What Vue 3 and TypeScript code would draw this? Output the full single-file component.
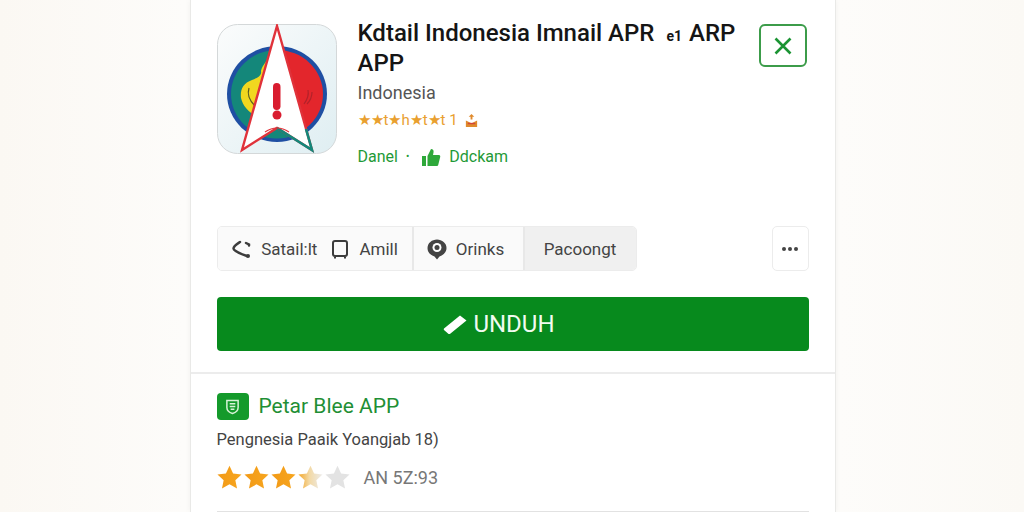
<script setup lang="ts">
interface Tab {
  label: string;
  icon?: 'share' | 'book' | 'pin';
}

const groups: { tabs: Tab[]; active?: boolean; width: number }[] = [
  {
    width: 196,
    tabs: [
      { label: 'Satail:lt', icon: 'share' },
      { label: 'Amill', icon: 'book' },
    ],
  },
  { width: 111, tabs: [{ label: 'Orinks', icon: 'pin' }] },
  { width: 111, active: true, tabs: [{ label: 'Pacoongt' }] },
];

const STAR = 'M12 1.5l3.2 6.9 7.5.9-5.5 5.1 1.500 7.4L12 18.100l-6.700 3.700 1.500-7.400L1.300 9.300l7.500-.9z';
const stars = ['url(#full)', 'url(#full)', 'url(#full)', 'url(#half)', '#e3e3e3'];
</script>

<template>
  <main class="page">
    <section class="card">
      <div class="top">
        <header class="head">
          <div class="app-icon">
            <svg viewBox="0 0 120 130" width="120" height="130">
              <defs>
                <linearGradient id="tile" x1="0" y1="0" x2="1" y2="1">
                  <stop offset="0" stop-color="#fbfcfc" />
                  <stop offset="1" stop-color="#dfeef2" />
                </linearGradient>
              </defs>
              <rect x=".5" y=".5" width="119" height="129" rx="20" fill="url(#tile)" stroke="#d4d8d9" />
              <ellipse cx="60" cy="70" rx="50" ry="48" fill="#1f4fa3" />
              <path d="M60 26A46 44 0 0 1 60 114z" fill="#e3262c" />
              <path d="M60 26A46 44 0 0 0 60 114z" fill="#14877a" />
              <path d="M80 110a46 44 0 0 1-40 0l20-12z" fill="#14877a" />
              <path d="M54 27c-1 7-9 14-10 20 1 5-4 7-9 9-9 3-12 10-11 18 2 9 9 15 19 21l12-30z" fill="#f1d71f" />
              <path d="M32 64c-2 6 0 12 6 18" fill="none" stroke="#5a5a22" stroke-width="1.200" />
              <path d="M91 66c1 5-1 10-4 14M95 68c0 5-2 9-5 12" fill="none" stroke="#b3222a" stroke-width="1.200" />
              <path d="M60 2l35 124-35-22-35 22z" fill="#fff" stroke="#e0323a" stroke-width="2.400" stroke-linejoin="miter" />
              <path d="M60 104l35 22-6-21" fill="none" stroke="#14877a" stroke-width="2.600" />
              <path d="M48 108q12-8 24 0" fill="none" stroke="#e0323a" stroke-width="1.200" />
              <rect x="56" y="59" width="7.500" height="27" rx="3.700" fill="#d91c2f" />
              <circle cx="60" cy="91" r="4.500" fill="#d91c2f" />
            </svg>
          </div>
          <div class="info">
            <h1 class="title">
              <span class="line">Kdtail Indonesia Imnail APR <small>e1</small> ARP</span>
              <span class="line">APP</span>
            </h1>
            <p class="region">Indonesia</p>
            <p class="rating">
              ★★t★h★t★t 1
              <svg viewBox="0 0 16 16" width="15" height="15">
                <path d="M8 1l3 3H9v3H7V4H5zM2 8l6 3 6-3v7H2z" fill="#e08a2c" />
                <path d="M4 10.500h8v1.500H4z" fill="#d0453a" />
              </svg>
            </p>
            <p class="meta">
              <span>Danel</span>
              <span class="dot">•</span>
              <svg viewBox="0 0 20 20" width="20" height="20">
                <path d="M1 9h4v10H1zM6.500 9l3.500-7c2 0 3 1.500 2.500 3.500L12 8h6c1 0 1.500 1 1.200 2l-2 8c-.2.700-.8 1-1.500 1H6.500z" fill="#2eA83a" />
              </svg>
              <span>Ddckam</span>
            </p>
          </div>
          <button class="close" type="button" aria-label="Tutup">
            <svg viewBox="0 0 20 20" width="20" height="20">
              <path d="M2.500 2.500l15 15M17.500 2.500l-15 15" stroke="#1b9433" stroke-width="2.600" fill="none" />
            </svg>
          </button>
        </header>

        <div class="actions">
          <div class="tabs">
            <div
              v-for="group in groups"
              :key="group.label"
              class="group"
              :class="{ active: group.active }"
              :style="{ width: group.width + 'px' }"
            >
              <span v-for="tab in group.tabs" :key="tab.label" class="tab">
                <svg v-if="tab.icon === 'share'" viewBox="0 0 22 22" width="22" height="22">
                  <path d="M9 4C6 6 2.500 8 2.500 10.500 2.500 12.500 10 16 16 18M15 5l3 1.500v1" fill="none" stroke="#3c3c3c" stroke-width="2.500" stroke-linecap="round" />
                  <circle cx="17" cy="18" r="2" fill="#3c3c3c" />
                </svg>
                <svg v-else-if="tab.icon === 'book'" viewBox="0 0 22 22" width="22" height="22">
                  <path d="M4 5c0-1.500 1-2 2-2h10c1 0 2 .5 2 2v11c0 1.500-1 2-2 2H6c-1 0-2-.5-2-2z" fill="none" stroke="#3c3c3c" stroke-width="2" />
                  <path d="M6 19v1.500M16 19v1.500" stroke="#3c3c3c" stroke-width="2" />
                </svg>
                <svg v-else-if="tab.icon === 'pin'" viewBox="0 0 22 22" width="22" height="22">
                  <path d="M11 1.500c5 0 9.500 3.600 9.500 8.500s-4 7.500-7 8.500L11 21.500 8.500 18.500c-3-1-7-3.500-7-8.500S6 1.500 11 1.500z" fill="#444" />
                  <circle cx="11" cy="9.500" r="4.500" fill="#fff" />
                  <circle cx="11" cy="9.500" r="2.500" fill="#444" />
                </svg>
                {{ tab.label }}
              </span>
            </div>
          </div>
          <button class="more" type="button" aria-label="Lainnya">
            <i /><i /><i />
          </button>
        </div>

        <button class="download" type="button">
          <svg viewBox="0 0 26 22" width="26" height="22">
            <path d="M2 15.500L18 2.500 24.500 7.500 8.500 20.500c-1 .8-1.800.7-2.500 0L2 17c-.4-.4-.4-1 0-1.500z" fill="#fff" />
          </svg>
          UNDUH
        </button>
      </div>

      <div class="detail">
        <div class="brand">
          <span class="brand-icon">
            <svg viewBox="0 0 16 18" width="15" height="17">
              <path d="M2 2.500h12V10c0 3.500-3 5.500-6 6.500C5 15.500 2 13.500 2 10z" fill="none" stroke="#d8f3d8" stroke-width="1.600" />
              <path d="M5 6h6M5 9h6M6 12h4" stroke="#d8f3d8" stroke-width="1.500" />
            </svg>
          </span>
          <h2 class="brand-name">Petar Blee APP</h2>
        </div>
        <p class="publisher">Pengnesia Paaik Yoangjab 18)</p>
        <div class="score">
          <svg width="0" height="0" class="defs">
            <defs>
              <linearGradient id="full"><stop offset="0" stop-color="#f29a17" /><stop offset="1" stop-color="#f7a51e" /></linearGradient>
              <linearGradient id="half">
                <stop offset="0" stop-color="#f3a628" />
                <stop offset=".45" stop-color="#f3d9a4" />
                <stop offset="1" stop-color="#ececec" />
              </linearGradient>
            </defs>
          </svg>
          <span class="stars">
            <svg v-for="(fill, i) in stars" :key="i" viewBox="0 0 24 24" width="27" height="27">
              <path :d="STAR" :fill="fill" />
            </svg>
          </span>
          <span class="count">AN 5Z:93</span>
        </div>
        <div class="rule" />
      </div>
    </section>
  </main>
</template>

<style>
html,
body {
  margin: 0;
  background: #fbf9f6;
}
</style>

<style scoped>
.page {
  display: flex;
  justify-content: center;
  height: 512px;
  overflow: hidden;
  font-family: Roboto, "Liberation Sans", sans-serif;
  background: linear-gradient(90deg, #fbf8f3, #fdfcfa 18%, #fdfcfa 82%, #fbf9f5);
}

.card {
  box-sizing: border-box;
  width: 646px;
  height: 512px;
  margin-left: 1px;
  background: #fff;
  border-left: 1px solid #e9e9e7;
  border-right: 1px solid #e9e9e7;
  box-shadow: 0 0 6px rgba(0, 0, 0, 0.05);
}

.top {
  box-sizing: border-box;
  height: 374px;
  padding: 24px 26px 0;
  border-bottom: 2px solid #ececec;
}

.head {
  display: flex;
  align-items: flex-start;
  height: 202px;
}

.app-icon {
  flex: none;
  width: 120px;
  height: 130px;
  margin-right: 21px;
}

.app-icon svg {
  display: block;
}

.info {
  flex: 1;
  min-width: 0;
}

.title {
  margin: -6px 0 0;
  font-size: 24px;
  font-weight: 500;
  line-height: 30px;
  color: #151515;
}

.line {
  display: block;
  white-space: nowrap;
}

.title small {
  margin: 0 1px 0 6px;
  font-size: 14px;
  font-weight: 700;
  line-height: 0;
}

.region {
  margin: 3px 0 0;
  font-size: 18px;
  line-height: 24px;
  color: #555;
}

.rating {
  display: flex;
  align-items: center;
  gap: 6px;
  margin: 6px 0 0;
  font-size: 15px;
  line-height: 18px;
  color: #e9a02f;
}

.meta {
  display: flex;
  align-items: center;
  gap: 8px;
  margin: 18px 0 0;
  font-size: 16px;
  line-height: 20px;
  color: #1f9a37;
}

.dot {
  margin-right: 4px;
  font-size: 10px;
}

.close {
  display: flex;
  flex: none;
  align-items: center;
  justify-content: center;
  width: 48px;
  height: 43px;
  padding: 0;
  margin-right: 2px;
  background: #fff;
  border: 2px solid #3c9c4a;
  border-radius: 6px;
}

.actions {
  display: flex;
  justify-content: space-between;
}

.tabs {
  display: flex;
  box-sizing: border-box;
  height: 45px;
  overflow: hidden;
  border: 1px solid #ececec;
  border-radius: 5px;
}

.group {
  display: flex;
  gap: 12px;
  align-items: center;
  justify-content: center;
  box-sizing: border-box;
  background: #fafafa;
  border-right: 2px solid #e8e8e8;
}

.group:nth-child(2) {
  padding-right: 6px;
}

.group:last-child {
  border-right: 0;
}

.group.active {
  background: #f0f0f0;
}

.tab {
  display: flex;
  gap: 8px;
  align-items: center;
  font-size: 17px;
  color: #444;
  white-space: nowrap;
}

.more {
  display: flex;
  gap: 2px;
  align-items: center;
  justify-content: center;
  width: 37px;
  height: 45px;
  padding: 0;
  background: #fff;
  border: 1px solid #ececec;
  border-radius: 5px;
}

.more i {
  width: 4px;
  height: 4px;
  background: #444;
  border-radius: 50%;
}

.download {
  display: flex;
  gap: 5px;
  align-items: center;
  justify-content: center;
  width: 592px;
  height: 54px;
  padding: 0 28px 0 0;
  margin-top: 26px;
  font-family: inherit;
  font-size: 24px;
  font-weight: 400;
  color: #f1fbf0;
  background: #078a1d;
  border: 0;
  border-radius: 4px;
}

.detail {
  padding: 18px 26px 0;
}

.brand {
  display: flex;
  gap: 10px;
  align-items: center;
}

.brand-icon {
  display: flex;
  align-items: center;
  justify-content: center;
  width: 32px;
  height: 27px;
  background: #149a2b;
  border-radius: 4px;
}

.brand-name {
  margin: 0;
  font-size: 21px;
  font-weight: 400;
  line-height: 29px;
  color: #1f8f35;
}

.publisher {
  margin: 8px 0 0;
  font-size: 16.500px;
  line-height: 22px;
  color: #444;
}

.score {
  display: flex;
  align-items: center;
  gap: 13px;
  margin-top: 13px;
}

.defs {
  position: absolute;
}

.stars {
  display: flex;
  margin-left: -1px;
}

.stars svg {
  display: block;
}

.count {
  font-size: 18px;
  color: #777;
}

.rule {
  height: 1px;
  margin-top: 20px;
  background: #e2e2e2;
}
</style>
